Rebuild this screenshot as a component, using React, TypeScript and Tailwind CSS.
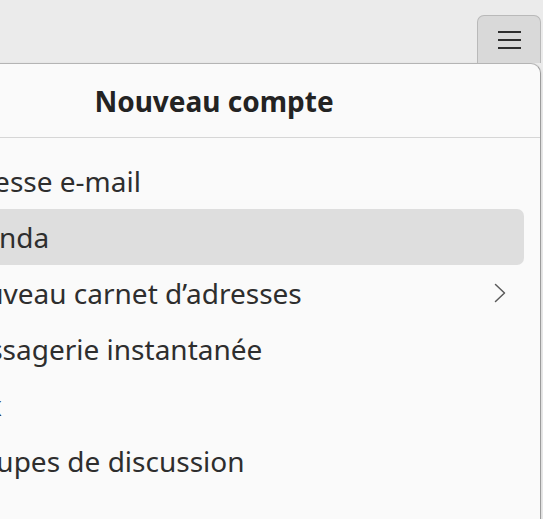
const items = [
  { label: "Adresse e-mail" },
  { label: "Agenda", active: true },
  { label: "Nouveau carnet d’adresses", submenu: true },
  { label: "Messagerie instantanée" },
  { label: "Flux" },
  { label: "Groupes de discussion" },
];

function Chevron() {
  return (
    <svg width="12" height="20" viewBox="0 0 12 20" fill="none">
      <path d="M1.5 1.5 L10.5 10 L1.5 18.5" stroke="#5a5a5a" strokeWidth="1.5" strokeLinecap="round" strokeLinejoin="round" />
    </svg>
  );
}

export default function App() {
  return (
    <div
      className="relative h-[519px] w-[543px] overflow-hidden bg-[#ebebeb] text-[#2e2e2e]"
      style={{ fontFamily: '"Noto Sans", "Open Sans", sans-serif' }}
    >
      {/* header bar with menu button */}
      <div className="flex h-[63px] items-end justify-end pr-[2px]">
        <button
          type="button"
          className="flex h-[48px] w-[64px] flex-col items-center justify-center gap-[6px] rounded-t-[7px] border border-b-0 border-[#b9b9b9] bg-[#d9d9d9]"
        >
          <span className="block h-[2px] w-[23px] bg-[#2e2e2e]" />
          <span className="block h-[2px] w-[23px] bg-[#2e2e2e]" />
          <span className="block h-[2px] w-[23px] bg-[#2e2e2e]" />
        </button>
      </div>

      {/* popover menu */}
      <div className="ml-[-113px] h-[470px] w-[654px] rounded-tr-[10px] border border-[#b4b4b4] border-r-[#9c9c9c] bg-[#fafafa] shadow-[0_1px_3px_rgba(0,0,0,0.12)]">
        <div className="flex h-[73px] items-center justify-center">
          <h1 className="text-[28px] font-bold leading-none text-[#232323]">Nouveau compte</h1>
        </div>
        <div className="h-px bg-[#d6d6d6]" />

        <ul className="px-[16px] pt-[15px]">
          {items.map((item) => (
            <li
              key={item.label}
              className={`flex h-[56px] items-center justify-between rounded-[7px] pl-[44px] pr-[18px] text-[28px] leading-none ${
                item.active ? "bg-[#dedede]" : ""
              }`}
            >
              <span className="whitespace-nowrap">{item.label}</span>
              {item.submenu ? <Chevron /> : null}
            </li>
          ))}
        </ul>
      </div>
    </div>
  );
}
